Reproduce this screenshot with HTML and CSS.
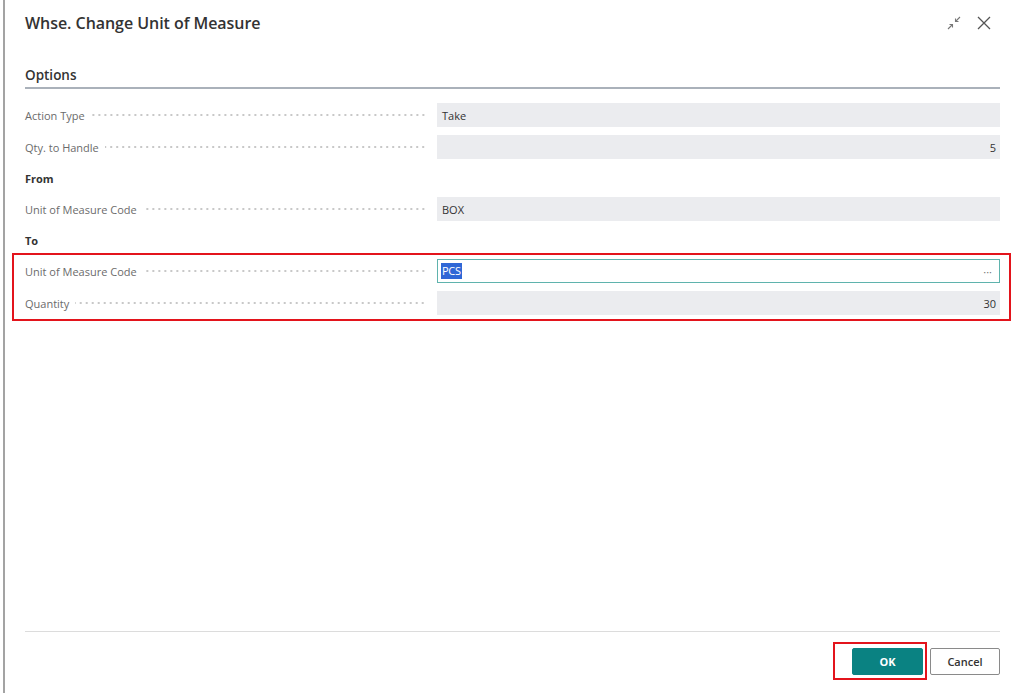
FILE: index.html
```html
<!DOCTYPE html>
<html lang="en">
<head>
<meta charset="utf-8">
<title>Whse. Change Unit of Measure</title>
<link rel="stylesheet" href="styles.css">
</head>
<body>
<div class="page">
  <div class="dialog">
    <header class="dlg-head">
      <h1 class="title">Whse. Change Unit of Measure</h1>
      <div class="head-icons">
        <svg class="ico" width="16" height="16" viewBox="0 0 16 16" aria-hidden="true">
          <path d="M14 2 L9.5 6.5 M9.5 3.5 V6.5 H12.5" fill="none" stroke="#777" stroke-width="1.1"/>
          <path d="M2 14 L6.5 9.5 M3.5 9.5 H6.5 V12.5" fill="none" stroke="#777" stroke-width="1.1"/>
        </svg>
        <svg class="ico close" width="16" height="16" viewBox="0 0 16 16" aria-hidden="true">
          <path d="M2 2 L14 14 M14 2 L2 14" fill="none" stroke="#555" stroke-width="1.3"/>
        </svg>
      </div>
    </header>

    <section class="options">
      <h2 class="section-title">Options</h2>
      <div class="form">
        <div class="row">
          <span class="label">Action Type</span><span class="leader"></span>
          <div class="field">Take</div>
        </div>
        <div class="row">
          <span class="label">Qty. to Handle</span><span class="leader"></span>
          <div class="field num">5</div>
        </div>
        <div class="group">From</div>
        <div class="row">
          <span class="label">Unit of Measure Code</span><span class="leader"></span>
          <div class="field">BOX</div>
        </div>
        <div class="group">To</div>
        <div class="highlight">
          <div class="row">
            <span class="label">Unit of Measure Code</span><span class="leader"></span>
            <div class="field edit"><span class="sel">PCS</span><span class="more">···</span></div>
          </div>
          <div class="row">
            <span class="label">Quantity</span><span class="leader"></span>
            <div class="field num">30</div>
          </div>
        </div>
      </div>
    </section>

    <footer class="dlg-foot">
      <div class="buttons">
        <div class="btn-mark"><button class="btn primary">OK</button></div>
        <button class="btn secondary">Cancel</button>
      </div>
    </footer>
  </div>
</div>
</body>
</html>
```
FILE: styles.css
```css
* { box-sizing: border-box; }
html, body {
  margin: 0;
  padding: 0;
  background: #fff;
}
body {
  font-family: "Open Sans", "Noto Sans", "Liberation Sans", sans-serif;
  color: #333;
  width: 1024px;
  height: 693px;
  overflow: hidden;
}
.page {
  height: 693px;
  border-left: 2px solid #a3a3a3;
  margin-left: 3px;
}
.dialog {
  height: 693px;
  display: flex;
  flex-direction: column;
  padding: 0 24px 0 20px;
}
.dlg-head {
  display: flex;
  align-items: center;
  justify-content: space-between;
  height: 45px;
}
.title {
  margin: 0;
  font-size: 16px;
  font-weight: 600;
  color: #333;
  letter-spacing: -0.05px;
}
.head-icons {
  display: flex;
  align-items: center;
  gap: 14px;
  margin-right: 8px;
}
.ico { display: block; }
.section-title {
  margin: 20px 0 0 0;
  font-size: 13.5px;
  font-weight: 600;
  color: #333;
  height: 24px;
  line-height: 20px;
  border-bottom: 2px solid #aab1ba;
}
.form {
  padding-top: 10px;
}
.row {
  display: flex;
  align-items: center;
  height: 32px;
}
.label {
  font-size: 11px;
  color: #6b6b6b;
  white-space: nowrap;
  padding-right: 6px;
}
.leader {
  flex: 1;
  height: 4px;
  margin-right: 11px;
  background-image: radial-gradient(circle, #c8c8c8 0.8px, transparent 1.1px);
  background-size: 6px 4px;
  background-repeat: repeat-x;
  background-position: right center;
}
.field {
  flex: 0 0 563px;
  height: 24px;
  background: #ebecef;
  font-size: 11px;
  color: #333;
  display: flex;
  align-items: center;
  padding: 0 5px;
}
.field.num {
  justify-content: flex-end;
  padding-right: 4px;
}
.field.edit {
  background: #fff;
  border: 1px solid #5fb3ad;
  padding-left: 3px;
  justify-content: space-between;
}
.sel {
  background: #2f67d6;
  color: #fff;
  letter-spacing: -0.3px;
  line-height: 16px;
  padding: 0 1px;
}
.more {
  color: #777;
  font-size: 11px;
  padding-right: 2px;
}
.group {
  height: 30px;
  display: flex;
  align-items: center;
  font-size: 11px;
  font-weight: 700;
  color: #333;
}
.highlight {
  margin: -2px -11px -2px -13px;
  padding: 0 9px 0 11px;
  border: 2px solid #e3141c;
}
.dlg-foot {
  margin-top: auto;
  border-top: 1px solid #dcdcdc;
  height: 62px;
  display: flex;
  justify-content: flex-end;
  align-items: flex-start;
  padding-top: 10px;
}
.buttons {
  display: flex;
  align-items: center;
  gap: 3px;
}
.btn-mark {
  border: 2px solid #e3141c;
  padding: 4px 2px 3px 17px;
}
.btn {
  font-family: "Open Sans", "Noto Sans", "Liberation Sans", sans-serif;
  font-size: 11px;
  height: 27px;
  border-radius: 2px;
  cursor: pointer;
}
.btn.primary {
  width: 71px;
  background: #0a8282;
  border: 1px solid #0a8282;
  color: #fff;
  font-weight: 700;
}
.btn.secondary {
  width: 70px;
  background: #fff;
  border: 1px solid #8a8a8a;
  color: #333;
  font-weight: 600;
}
```
